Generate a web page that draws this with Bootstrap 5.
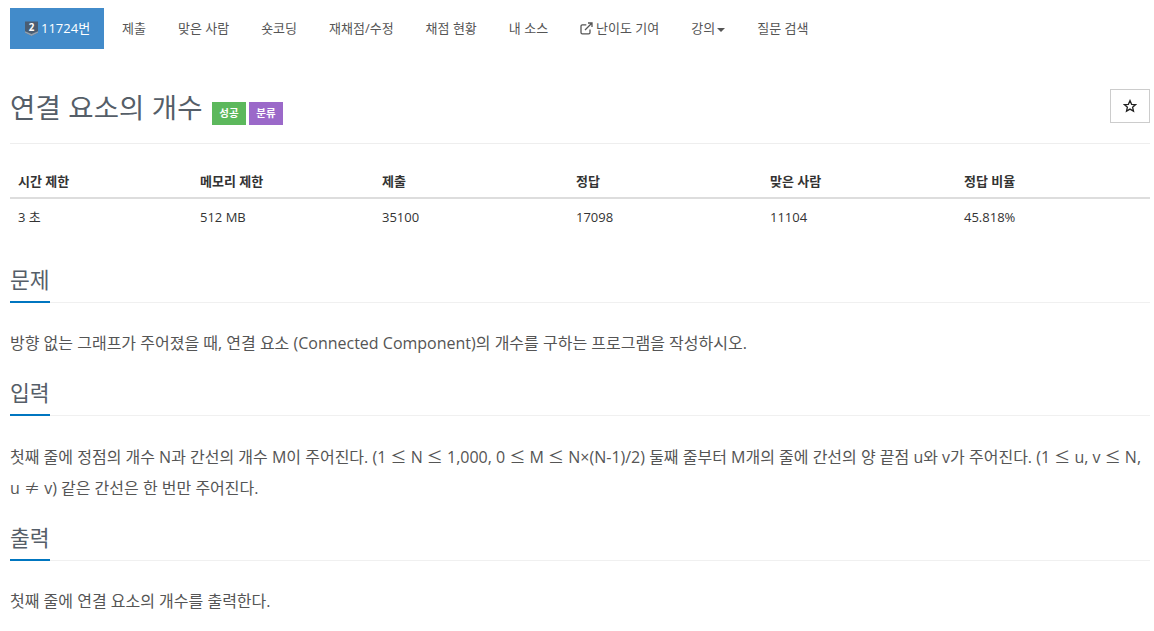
<!DOCTYPE html>
<html lang="ko">
<head>
    <meta charset="UTF-8">
    <meta name="viewport" content="width=device-width, initial-scale=1.0">
    <title>11724번: 연결 요소의 개수</title>
    <link href="https://cdn.jsdelivr.net/npm/bootstrap@5.3.0/dist/css/bootstrap.min.css" rel="stylesheet">
    <style>
        body { font-family: "Open Sans", "Noto Sans CJK KR", sans-serif; color: #555; font-size: 14px; line-height: 1.42857; overflow: hidden; }
        .page-wrap { padding: 8px 4px 0 10px; }
        .tabs-row { height: 41px; margin-bottom: 0; flex-wrap: nowrap; }
        .tabs-row a { display: flex; align-items: center; height: 41px; padding: 0 16px; color: #555; font-size: 13px; text-decoration: none; white-space: nowrap; }
        .tabs-row a.on { background: #428bca; color: #fff; width: 94px; padding: 0 0 0 15px; margin-right: 2px; }
        .tier-icon { margin-right: 3px; }
        .link-icon { margin-right: 3px; }
        .caret-down { display: inline-block; border-top: 4px solid #555; border-left: 4px solid transparent; border-right: 4px solid transparent; margin-left: 2px; margin-top: 2px; }
        .title-row { margin-top: 37px; height: 58px; border-bottom: 1px solid #eee; }
        .prob-title { font-size: 27.5px; line-height: 40px; color: #555e68; font-weight: 400; margin: 2px 0 0; letter-spacing: .15px; }
        .tag { display: inline-block; width: 34px; text-align: center; height: 23px; line-height: 23px; font-size: 10.5px; font-weight: 700; color: #fff; margin-left: 3px; vertical-align: 1px; letter-spacing: 0; }
        .tag-ok { background: #5cb85c; margin-left: 2px; }
        .tag-cat { background: #9b69c9; }
        .star-btn { width: 40px; height: 34px; border: 1px solid #ccc; background: #fff; padding: 0; margin-top: 3px; display: flex; align-items: center; justify-content: center; }
        .stat-table { width: 1140px; margin: 20px 0 0; font-size: 13px; color: #333; table-layout: fixed; }
        .stat-table th { padding: 8px 8px 6.5px; border-bottom: 2px solid #ddd; font-weight: 700; }
        .stat-table td { padding: 8px; height: 37px; }
        .stat-table th:nth-child(1), .stat-table th:nth-child(2) { width: 182px; }
        .sec-head { margin-top: 30px; height: 38px; border-bottom: 1px solid #f0f0f0; }
        .sec-head h2 { font-size: 21.5px; line-height: 29px; color: #555e68; font-weight: 400; margin: 0; padding-bottom: 7px; border-bottom: 2px solid #0076c0; display: inline-block; height: 38px; }
        .sec-body { font-size: 16px; line-height: 30px; color: #555; margin: 0; padding-top: 25px; }
        .sec-gap { margin-top: 20px; }
        .math-sym { font-family: "Noto Sans CJK KR", sans-serif; }
    </style>
</head>
<body>
    <div class="page-wrap">
        <nav class="d-flex tabs-row">
            <a class="on" href="#">
                <svg class="tier-icon" width="13" height="17" viewBox="0 0 14 17"><path d="M0 1h14v12l-7 3.5L0 13z" fill="#4a5d72"/><path d="M0 13l7 3.5L14 13v-1.5l-7 3-7-3z" fill="#8fa0b0"/><text x="7" y="11" font-size="10.5" font-weight="700" fill="#fff" text-anchor="middle" font-family="Open Sans">2</text></svg>
                11724번
            </a>
            <a href="#">제출</a>
            <a href="#">맞은 사람</a>
            <a href="#">숏코딩</a>
            <a href="#">재채점/수정</a>
            <a href="#">채점 현황</a>
            <a href="#">내 소스</a>
            <a href="#">
                <svg class="link-icon" width="13" height="13" viewBox="0 0 13 13" fill="none" stroke="#555" stroke-width="1.3"><path d="M10 7.5v3a1.3 1.3 0 0 1-1.3 1.3H2.3A1.3 1.3 0 0 1 1 10.5V4.2a1.3 1.3 0 0 1 1.3-1.3h4"/><path d="M5 8l6.5-6.5M8 1h4v4"/></svg>
                난이도 기여
            </a>
            <a href="#">강의<span class="caret-down"></span></a>
            <a href="#">질문 검색</a>
        </nav>

        <div class="d-flex justify-content-between align-items-start title-row">
            <h1 class="prob-title">연결 요소의 개수 <span class="tag tag-ok">성공</span><span class="tag tag-cat">분류</span></h1>
            <button class="star-btn" type="button" aria-label="즐겨찾기">
                <svg width="14" height="14" viewBox="0 0 14 14" fill="none" stroke="#222" stroke-width="1.3"><path d="M7 1.6l1.6 3.7 4 .3-3 2.6.9 3.9L7 10.1l-3.5 2 .9-3.9-3-2.6 4-.3z"/></svg>
            </button>
        </div>

        <table class="stat-table">
            <thead>
                <tr><th>시간 제한</th><th>메모리 제한</th><th>제출</th><th>정답</th><th>맞은 사람</th><th>정답 비율</th></tr>
            </thead>
            <tbody>
                <tr><td>3 초</td><td>512 MB</td><td>35100</td><td>17098</td><td>11104</td><td>45.818%</td></tr>
            </tbody>
        </table>

        <div class="sec-head"><h2>문제</h2></div>
        <p class="sec-body">방향 없는 그래프가 주어졌을 때, 연결 요소 (Connected Component)의 개수를 구하는 프로그램을 작성하시오.</p>

        <div class="sec-head sec-gap"><h2>입력</h2></div>
        <p class="sec-body">첫째 줄에 정점의 개수 N과 간선의 개수 M이 주어진다. (1 <span class="math-sym">≤</span> N <span class="math-sym">≤</span> 1,000, 0 <span class="math-sym">≤</span> M <span class="math-sym">≤</span> N×(N-1)/2) 둘째 줄부터 M개의 줄에 간선의 양 끝점 u와 v가 주어진다. (1 <span class="math-sym">≤</span> u, v <span class="math-sym">≤</span> N,<br>u <span class="math-sym">≠</span> v) 같은 간선은 한 번만 주어진다.</p>

        <div class="sec-head sec-gap"><h2>출력</h2></div>
        <p class="sec-body">첫째 줄에 연결 요소의 개수를 출력한다.</p>
    </div>
</body>
</html>
